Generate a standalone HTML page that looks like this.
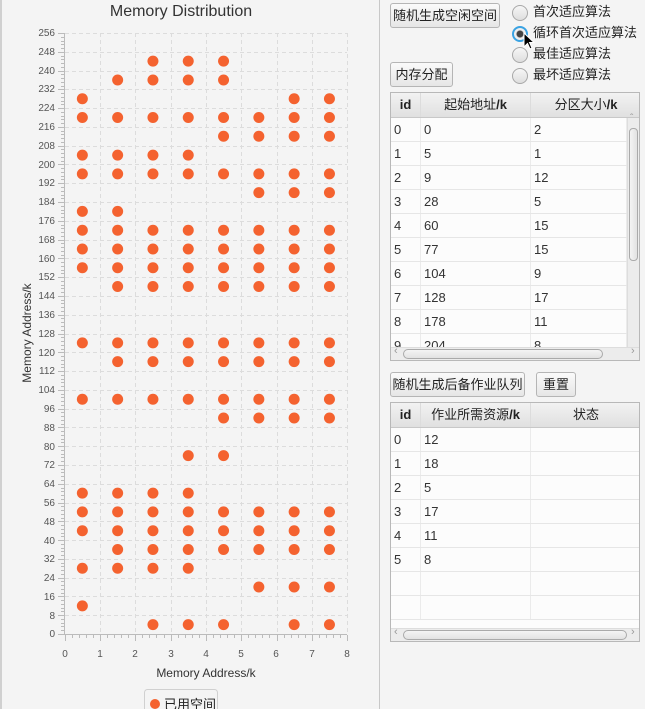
<!DOCTYPE html>
<html><head><meta charset="utf-8"><style>
*{box-sizing:border-box;margin:0;padding:0}
body{width:645px;height:709px;background:#f4f4f4;font-family:"Liberation Sans","Noto Sans CJK SC",sans-serif;position:relative;overflow:hidden;color:#222}
.abs{position:absolute}
.btn{position:absolute;height:25px;border:1px solid #b5b5b5;border-radius:3px;background:linear-gradient(#fafafa,#e6e6e6);font-size:13px;line-height:23px;text-align:center;color:#222}
.radio{position:absolute;left:512px;font-size:13px;height:18px;line-height:16px}
.radio i{position:absolute;left:0;top:1px;width:16px;height:16px;border:1px solid #a8a8a8;border-radius:50%;background:linear-gradient(#f6f6f6,#dedede)}
.radio span{position:absolute;left:21px;top:0;white-space:nowrap}
.tbl{position:absolute;left:390px;width:250px;border:1px solid #b8b8b8;background:#fcfcfc;overflow:hidden}
.hd{position:absolute;left:0;top:0;height:25px;width:100%;background:linear-gradient(#f2f2f2,#e0e0e0);border-bottom:1px solid #c8c8c8;font-size:13px;font-weight:bold;line-height:24px}
.hd div,.row div{position:absolute;top:0;height:100%;border-right:1px solid #dcdcdc}
.row{position:absolute;left:0;width:100%;height:24px;border-bottom:1px solid #e6e6e6;font-size:13px;line-height:23px;color:#333}
.row div{padding-left:3px;border-right:1px solid #ebebeb}
</style></head><body>
<div class="abs" style="left:0;top:0;width:2px;height:709px;background:#d0d0d0"></div>
<div class="abs" style="left:379px;top:0;width:1px;height:709px;background:#c8c8c8"></div>
<svg class="abs" style="left:0;top:0" width="380" height="709" id="ch">
<text x="181" y="16" font-size="16" text-anchor="middle" fill="#333" font-family="Liberation Sans, sans-serif">Memory Distribution</text>
<g id="grid" stroke="#dcdcdc" stroke-dasharray="4,3" stroke-width="1"></g>
<g id="ticks" stroke="#bbb" stroke-width="1"></g>
<line x1="64.5" y1="33" x2="64.5" y2="634" stroke="#bbb"/>
<line x1="64" y1="634.5" x2="347" y2="634.5" stroke="#bbb"/>
<g font-size="10" fill="#555" text-anchor="end" font-family="Liberation Sans, sans-serif">
<text x="55" y="637">0</text><text x="55" y="619">8</text><text x="55" y="600">16</text><text x="55" y="581">24</text><text x="55" y="562">32</text><text x="55" y="544">40</text><text x="55" y="525">48</text><text x="55" y="506">56</text><text x="55" y="487">64</text><text x="55" y="468">72</text><text x="55" y="450">80</text><text x="55" y="431">88</text><text x="55" y="412">96</text><text x="55" y="393">104</text><text x="55" y="374">112</text><text x="55" y="356">120</text><text x="55" y="337">128</text><text x="55" y="318">136</text><text x="55" y="299">144</text><text x="55" y="280">152</text><text x="55" y="262">160</text><text x="55" y="243">168</text><text x="55" y="224">176</text><text x="55" y="205">184</text><text x="55" y="186">192</text><text x="55" y="168">200</text><text x="55" y="149">208</text><text x="55" y="130">216</text><text x="55" y="111">224</text><text x="55" y="92">232</text><text x="55" y="74">240</text><text x="55" y="55">248</text><text x="55" y="36">256</text>
</g>
<g font-size="10" fill="#555" text-anchor="middle" font-family="Liberation Sans, sans-serif">
<text x="65" y="657">0</text><text x="100" y="657">1</text><text x="135" y="657">2</text><text x="171" y="657">3</text><text x="206" y="657">4</text><text x="241" y="657">5</text><text x="276" y="657">6</text><text x="312" y="657">7</text><text x="347" y="657">8</text>
</g>
<text x="206" y="677" font-size="12" fill="#333" text-anchor="middle" font-family="Liberation Sans, sans-serif">Memory Address/k</text>
<text transform="translate(31,333) rotate(-90)" font-size="12" fill="#333" text-anchor="middle" font-family="Liberation Sans, sans-serif">Memory Address/k</text>
<g id="dots" fill="#f4622f"></g>
<rect x="144.5" y="689.5" width="73" height="30" rx="3" fill="#f4f4f4" stroke="#d0d0d0"/>
<circle cx="155" cy="704" r="5" fill="#f4622f"/>
<text x="164" y="709" font-size="13" fill="#222" font-family="Liberation Sans, Noto Sans CJK SC, sans-serif">已用空间</text>
</svg>
<script>
(function(){
var ns="http://www.w3.org/2000/svg";
function Y(v){return 634-v*601/256}
function X(v){return 64.7+v*35.3}
var g=document.getElementById('grid'),t=document.getElementById('ticks'),d=document.getElementById('dots');
function ln(p,a,b,c,e){var l=document.createElementNS(ns,'line');l.setAttribute('x1',a);l.setAttribute('y1',b);l.setAttribute('x2',c);l.setAttribute('y2',e);p.appendChild(l)}
for(var v=8;v<=256;v+=8){var y=Math.round(Y(v))+.5;ln(g,65,y,347,y)}
for(var i=1;i<=8;i++){var x=Math.round(X(i))+.5;ln(g,x,33,x,634)}
for(var v=0;v<=256;v+=1.6){var y=Math.round(Y(v))+.5;var mj=Math.abs(v/8-Math.round(v/8))<0.01;ln(t,mj?58:61,y,64,y)}
for(var i=0;i<=40;i++){var x=Math.round(X(i/5))+.5;ln(t,x,635,x,i%5==0?641:638)}
var A=[0,1,2,3,4,5,6,7];
var R=[[244,[2,3,4]],[236,[1,2,3,4]],[228,[0,6,7]],[220,A],[212,[4,5,6,7]],[204,[0,1,2,3]],[196,A],[188,[5,6,7]],[180,[0,1]],[172,A],[164,A],[156,A],[148,[1,2,3,4,5,6,7]],[124,A],[116,[1,2,3,4,5,6,7]],[100,A],[92,[4,5,6,7]],[76,[3,4]],[60,[0,1,2,3]],[52,A],[44,A],[36,[1,2,3,4,5,6,7]],[28,[0,1,2,3]],[20,[5,6,7]],[12,[0]],[4,[2,3,4,6,7]]];
R.forEach(function(r){r[1].forEach(function(c){var e=document.createElementNS(ns,'circle');e.setAttribute('cx',X(c+.5));e.setAttribute('cy',Y(r[0]));e.setAttribute('r',5.5);d.appendChild(e)})});
})();
</script>
<div class="btn" style="left:390px;top:3px;width:110px">随机生成空闲空间</div>
<div class="btn" style="left:390px;top:62px;width:63px">内存分配</div>
<div class="radio" style="top:4px"><i></i><span>首次适应算法</span></div>
<div class="radio" style="top:25px"><i style="border:2px solid #3aa3e3;background:radial-gradient(circle,#444 0,#444 3px,#eee 4px)"></i><span>循环首次适应算法</span></div>
<div class="radio" style="top:46px"><i></i><span>最佳适应算法</span></div>
<div class="radio" style="top:67px"><i></i><span>最坏适应算法</span></div>
<svg class="abs" style="left:523px;top:32px" width="14" height="20"><path d="M1 1 L1 15 L4.5 11.5 L7 17 L9 16 L6.5 10.5 L11 10.5 Z" fill="#000" stroke="#fff" stroke-width="1"/></svg>

<div class="tbl" style="top:92px;height:269px">
<div class="hd"><div style="left:0;width:30px;text-align:center">id</div><div style="left:30px;width:110px;text-align:center;font-weight:normal">起始地址<b>/k</b></div><div style="left:140px;width:110px;text-align:center;font-weight:normal;border:none">分区大小<b>/k</b></div></div>
<div class="row" style="top:25px"><div style="left:0;width:30px">0</div><div style="left:30px;width:110px">0</div><div style="left:140px;width:96px">2</div></div>
<div class="row" style="top:49px"><div style="left:0;width:30px">1</div><div style="left:30px;width:110px">5</div><div style="left:140px;width:96px">1</div></div>
<div class="row" style="top:73px"><div style="left:0;width:30px">2</div><div style="left:30px;width:110px">9</div><div style="left:140px;width:96px">12</div></div>
<div class="row" style="top:97px"><div style="left:0;width:30px">3</div><div style="left:30px;width:110px">28</div><div style="left:140px;width:96px">5</div></div>
<div class="row" style="top:121px"><div style="left:0;width:30px">4</div><div style="left:30px;width:110px">60</div><div style="left:140px;width:96px">15</div></div>
<div class="row" style="top:145px"><div style="left:0;width:30px">5</div><div style="left:30px;width:110px">77</div><div style="left:140px;width:96px">15</div></div>
<div class="row" style="top:169px"><div style="left:0;width:30px">6</div><div style="left:30px;width:110px">104</div><div style="left:140px;width:96px">9</div></div>
<div class="row" style="top:193px"><div style="left:0;width:30px">7</div><div style="left:30px;width:110px">128</div><div style="left:140px;width:96px">17</div></div>
<div class="row" style="top:217px"><div style="left:0;width:30px">8</div><div style="left:30px;width:110px">178</div><div style="left:140px;width:96px">11</div></div>
<div class="row" style="top:241px"><div style="left:0;width:30px">9</div><div style="left:30px;width:110px">204</div><div style="left:140px;width:96px">8</div></div>
<div class="abs" style="left:236px;top:25px;width:13px;height:230px;background:#ececec;border-left:1px solid #ddd"></div>
<div class="abs" style="left:238px;top:35px;width:9px;height:133px;border:1px solid #aaa;border-radius:4px;background:linear-gradient(90deg,#f4f4f4,#e2e2e2)"></div>
<div class="abs" style="left:0;top:254px;width:250px;height:14px;background:#ececec;border-top:1px solid #ddd"></div>
<div class="abs" style="left:12px;top:256px;width:200px;height:10px;border:1px solid #aaa;border-radius:5px;background:linear-gradient(#f4f4f4,#e2e2e2)"></div>
<div class="abs" style="left:3px;top:252px;font-size:11px;color:#999">‹</div><div class="abs" style="left:240px;top:252px;font-size:11px;color:#999">›</div>
<div class="abs" style="left:239px;top:20px;font-size:10px;color:#999">ˆ</div>
</div>

<div class="btn" style="left:390px;top:372px;width:135px">随机生成后备作业队列</div>
<div class="btn" style="left:536px;top:372px;width:40px">重置</div>

<div class="tbl" style="top:402px;height:240px">
<div class="hd"><div style="left:0;width:30px;text-align:center">id</div><div style="left:30px;width:110px;text-align:center;font-weight:normal">作业所需资源<b>/k</b></div><div style="left:140px;width:110px;text-align:center;font-weight:normal;border:none">状态</div></div>
<div class="row" style="top:25px"><div style="left:0;width:30px">0</div><div style="left:30px;width:110px">12</div><div style="left:140px;width:110px;border:none"></div></div>
<div class="row" style="top:49px"><div style="left:0;width:30px">1</div><div style="left:30px;width:110px">18</div><div style="left:140px;width:110px;border:none"></div></div>
<div class="row" style="top:73px"><div style="left:0;width:30px">2</div><div style="left:30px;width:110px">5</div><div style="left:140px;width:110px;border:none"></div></div>
<div class="row" style="top:97px"><div style="left:0;width:30px">3</div><div style="left:30px;width:110px">17</div><div style="left:140px;width:110px;border:none"></div></div>
<div class="row" style="top:121px"><div style="left:0;width:30px">4</div><div style="left:30px;width:110px">11</div><div style="left:140px;width:110px;border:none"></div></div>
<div class="row" style="top:145px"><div style="left:0;width:30px">5</div><div style="left:30px;width:110px">8</div><div style="left:140px;width:110px;border:none"></div></div>
<div class="row" style="top:169px"><div style="left:0;width:30px"></div><div style="left:30px;width:110px"></div><div style="left:140px;width:110px;border:none"></div></div>
<div class="row" style="top:193px"><div style="left:0;width:30px"></div><div style="left:30px;width:110px"></div><div style="left:140px;width:110px;border:none"></div></div>
<div class="abs" style="left:0;top:225px;width:250px;height:14px;background:#ececec;border-top:1px solid #ddd"></div>
<div class="abs" style="left:12px;top:227px;width:224px;height:10px;border:1px solid #aaa;border-radius:5px;background:linear-gradient(#f4f4f4,#e2e2e2)"></div>
<div class="abs" style="left:3px;top:223px;font-size:11px;color:#999">‹</div><div class="abs" style="left:240px;top:223px;font-size:11px;color:#999">›</div>
</div>
</body></html>
